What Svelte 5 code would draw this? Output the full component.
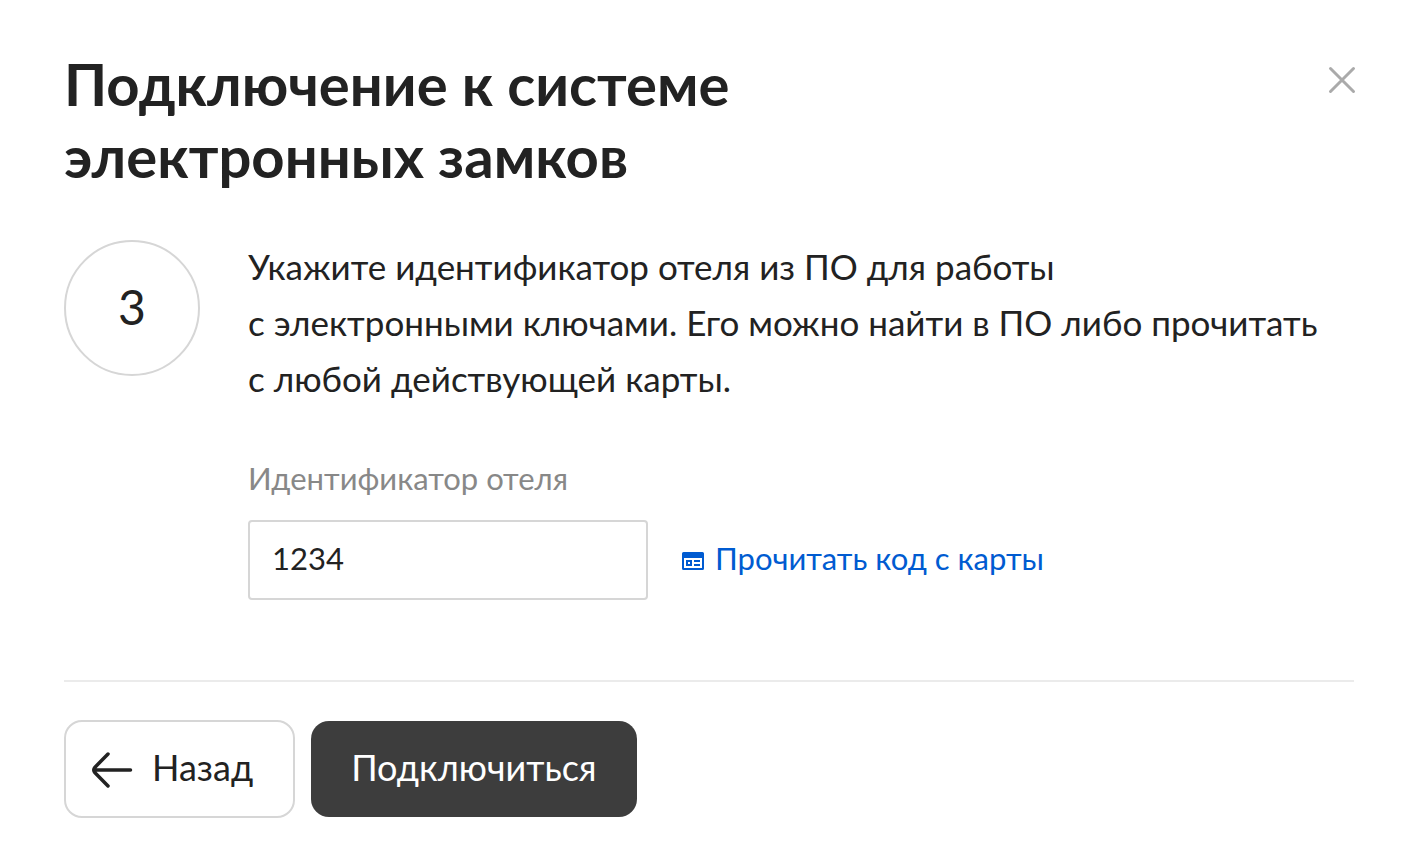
<script lang="ts">
	// LockConnectDialog
	// Third step of the electronic lock connection wizard

	interface Props {
		step?: number;
		onClose?: () => void;
		onBack?: () => void;
		onReadCard?: () => void;
		onConnect?: (hotelId: string) => void;
	}

	let { step = 3, onClose, onBack, onReadCard, onConnect }: Props = $props();

	let hotelId = $state('1234');

	function handleSubmit(event: SubmitEvent) {
		event.preventDefault();
		onConnect?.(hotelId);
	}
</script>

<form class="dialog" onsubmit={handleSubmit}>
	<header class="header">
		<h1 class="title">Подключение к системе<br />электронных замков</h1>
		<button type="button" class="close" aria-label="Закрыть" onclick={() => onClose?.()}>
			<svg viewBox="0 0 28 28" width="28" height="28" aria-hidden="true">
				<path d="M2.5 2.5l23 23M25.5 2.5l-23 23"></path>
			</svg>
		</button>
	</header>

	<div class="step">
		<div class="step-number">{step}</div>

		<div class="step-body">
			<p class="description">
				Укажите идентификатор отеля из ПО для работы<br />
				с&nbsp;электронными ключами. Его можно найти в&nbsp;ПО либо прочитать<br />
				с&nbsp;любой действующей карты.
			</p>

			<label class="label" for="hotel-id">Идентификатор отеля</label>
			<div class="field">
				<input id="hotel-id" class="input" type="text" bind:value={hotelId} />
				<button type="button" class="read-card" onclick={() => onReadCard?.()}>
					<svg viewBox="0 -2 22 20" width="22" height="20" aria-hidden="true">
						<path
							fill-rule="evenodd"
							d="M1.5 0h19A1.5 1.5 0 0 1 22 1.5v15a1.5 1.5 0 0 1-1.5 1.5h-19A1.5 1.5 0 0 1 0 16.5v-15A1.5 1.5 0 0 1 1.5 0zM2 6v10h18V6zM4 8h6v6H4zM6 10v2h2v-2zM12 8h6v2h-6zM12 12h6v2h-6z"
						></path>
					</svg>
					<span class="button-text">Прочитать код с карты</span>
				</button>
			</div>
		</div>
	</div>

	<footer class="footer">
		<button type="button" class="button back" onclick={() => onBack?.()}>
			<svg viewBox="0 0 40 36" width="40" height="36" aria-hidden="true">
				<path d="M16 3L3 16.2Q.6 19 3 21.8L16 35M2 19h36.500"></path>
			</svg>
			<span class="button-text">Назад</span>
		</button>
		<button type="submit" class="button connect">
			<span class="button-text">Подключиться</span>
		</button>
	</footer>
</form>

<style>
	:global(body) {
		margin: 0;
		background: #fff;
	}

	.dialog {
		padding: 48px 64px 40px;
		color: #222;
		font-family: Lato, 'Open Sans', sans-serif;
	}

	button,
	input {
		box-sizing: border-box;
		margin: 0;
		color: inherit;
		font-family: inherit;
	}

	button {
		cursor: pointer;
	}

	.header {
		display: flex;
		align-items: flex-start;
		justify-content: space-between;
	}

	.title {
		margin: 0;
		font-size: 58px;
		font-weight: 700;
		line-height: 72px;
	}

	.close {
		display: flex;
		margin: 16px -4px 0 0;
		padding: 2px;
		border: 0;
		background: none;
	}

	.close path {
		fill: none;
		stroke: #aaa;
		stroke-width: 3;
		stroke-linecap: round;
	}

	.step {
		display: flex;
		gap: 48px;
		margin-top: 48px;
		padding-bottom: 80px;
		border-bottom: 2px solid #ebebeb;
	}

	.step-number {
		box-sizing: border-box;
		display: flex;
		flex-shrink: 0;
		align-items: center;
		justify-content: center;
		width: 136px;
		height: 136px;
		padding-bottom: 4px;
		border: 2px solid #d6d6d6;
		border-radius: 50%;
		font-size: 48px;
	}

	.step-body {
		flex: 1;
		min-width: 0;
	}

	.description {
		margin: -2px 0 48px;
		font-size: 35px;
		line-height: 56px;
	}

	.label {
		display: block;
		margin-bottom: 18px;
		color: #888;
		font-size: 31px;
		line-height: 48px;
	}

	.field {
		display: flex;
		align-items: center;
		gap: 34px;
	}

	.input {
		width: 400px;
		height: 80px;
		padding: 0 22px 4px;
		border: 2px solid #d6d6d6;
		border-radius: 4px;
		background: #fff;
		font-size: 31px;
	}

	.read-card {
		display: flex;
		align-items: center;
		gap: 11px;
		padding: 0;
		border: 0;
		background: none;
		color: #005bd1;
		font-size: 31px;
		line-height: 48px;
	}

	.read-card svg {
		fill: currentColor;
	}

	.button-text {
		padding-bottom: 4px;
	}

	.footer {
		display: flex;
		align-items: center;
		gap: 16px;
		margin-top: 38px;
	}

	.button {
		display: flex;
		align-items: center;
		height: 96px;
		border: 0;
		border-radius: 18px;
		font-size: 36px;
	}

	.back {
		gap: 20px;
		height: 98px;
		padding: 0 40px 0 26px;
		border: 2px solid #d6d6d6;
		background: #fff;
	}

	.back svg {
		overflow: visible;
	}

	.back path {
		fill: none;
		stroke: #222;
		stroke-width: 3.5;
		stroke-linecap: round;
		stroke-linejoin: round;
	}

	.connect {
		padding: 0 40px;
		background: #3d3d3d;
		color: #fff;
	}
</style>
